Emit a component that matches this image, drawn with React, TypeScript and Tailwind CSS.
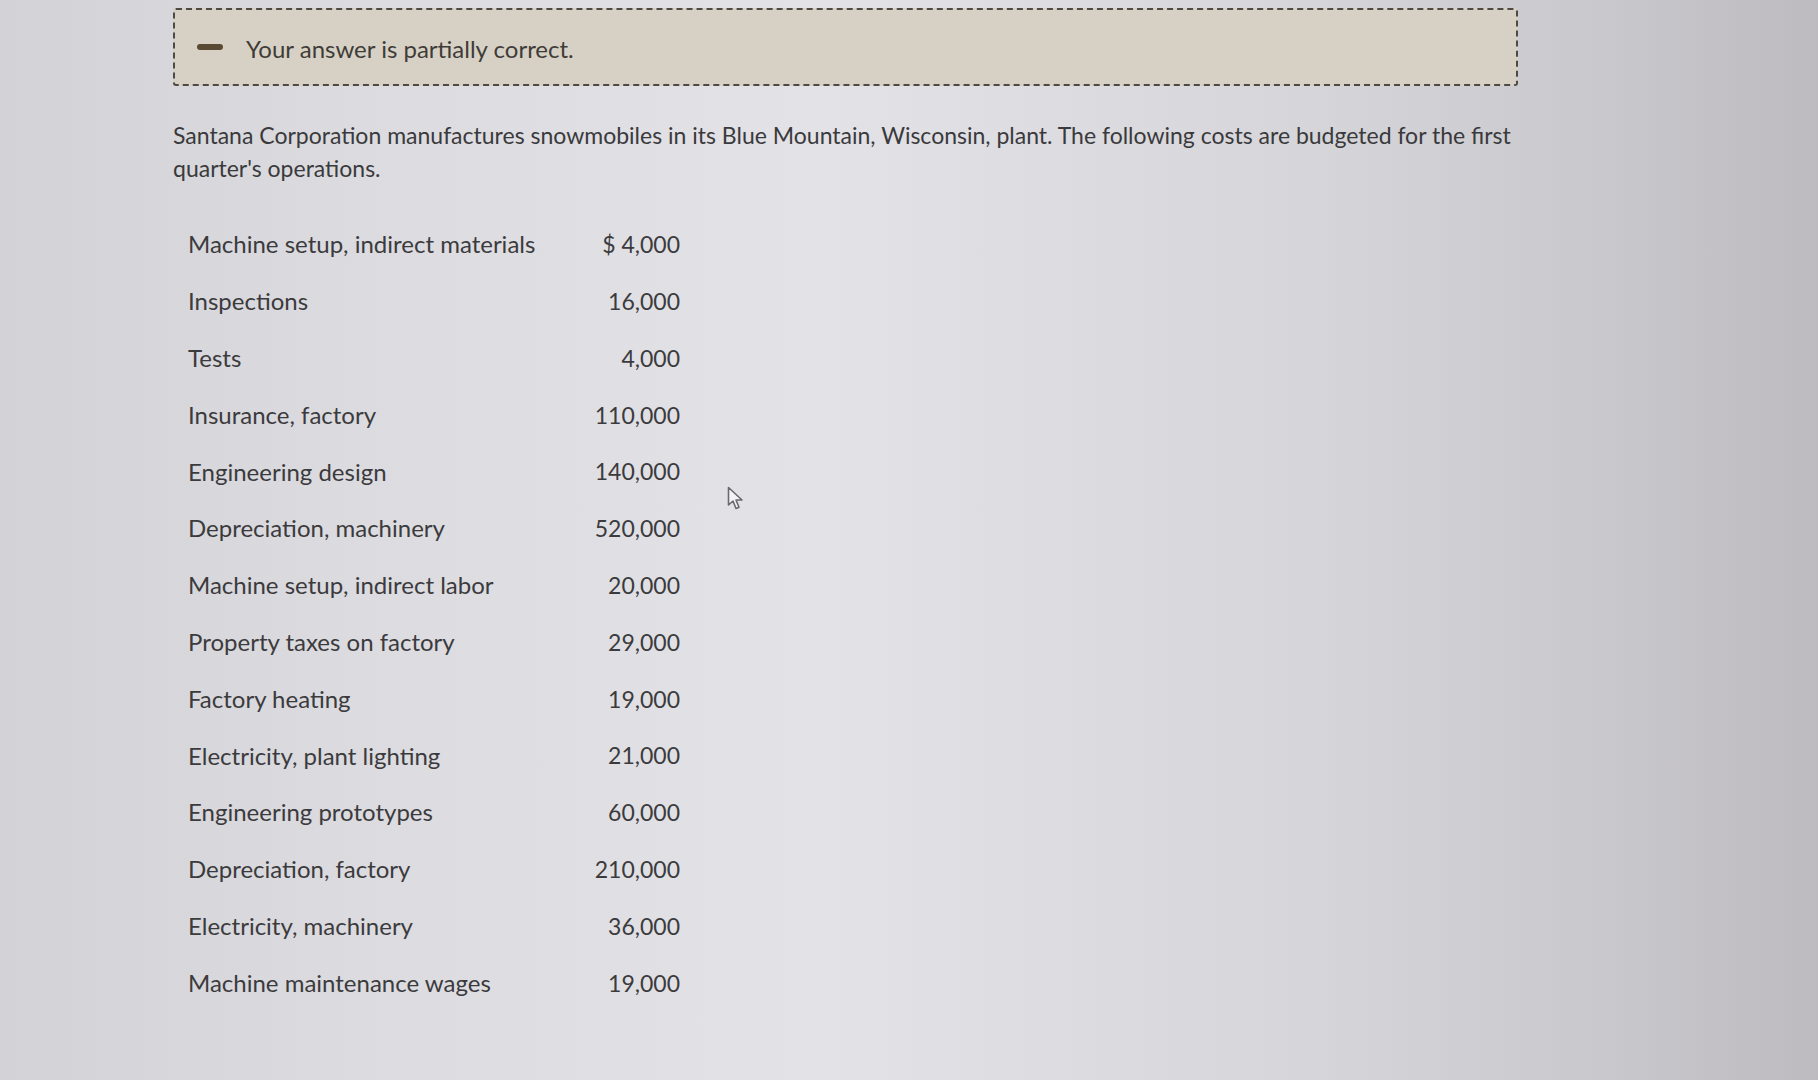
const ROWS: [string, string][] = [
  ["Machine setup, indirect materials", "$ 4,000"],
  ["Inspections", "16,000"],
  ["Tests", "4,000"],
  ["Insurance, factory", "110,000"],
  ["Engineering design", "140,000"],
  ["Depreciation, machinery", "520,000"],
  ["Machine setup, indirect labor", "20,000"],
  ["Property taxes on factory", "29,000"],
  ["Factory heating", "19,000"],
  ["Electricity, plant lighting", "21,000"],
  ["Engineering prototypes", "60,000"],
  ["Depreciation, factory", "210,000"],
  ["Electricity, machinery", "36,000"],
  ["Machine maintenance wages", "19,000"],
];

export default function App() {
  return (
    <div className="relative min-h-[1080px] w-full overflow-hidden bg-[linear-gradient(90deg,#d3d2d6_0%,#dcdbe0_20%,#e3e2e7_45%,#d6d5da_72%,#c9c8cc_88%,#bdbbc0_100%)] font-['Lato','Liberation_Sans',sans-serif] text-[#3b3b3d]">
      <div className="ml-[173px] w-[1345px] pt-[8px]">
        <div className="flex h-[78px] items-center rounded-[3px] border-2 border-dashed border-[#4d4a46] bg-[#d7d1c5] pl-[22px]">
          <span className="block h-[6px] w-[26px] rounded-full bg-[#5b4a33]" />
          <span className="ml-[23px] pt-[4px] text-[24px] text-[#3f3c38]">Your answer is partially correct.</span>
        </div>

        <p className="mt-[33px] text-[23px] leading-[33px] text-[#3a3a3c]">
          Santana Corporation manufactures snowmobiles in its Blue Mountain, Wisconsin, plant. The following costs are budgeted for the first quarter's operations.
        </p>

        <div className="mt-[31px] ml-[15px] w-[492px]">
          {ROWS.map(([label, value]) => (
            <div key={label} className="flex h-[56.8px] items-center justify-between">
              <span className="text-[24px]">{label}</span>
              <span className="text-[23px]">{value}</span>
            </div>
          ))}
        </div>
      </div>

      <svg className="absolute left-[727px] top-[486px]" width="18" height="26" viewBox="0 0 18 26">
        <path d="M1.5 1.5 L1.5 19 L6 15 L9 22.5 L12 21.2 L9 14 L15 14 Z" fill="#f4f4f6" stroke="#6a6a6e" strokeWidth="1.6" strokeLinejoin="round" />
      </svg>
    </div>
  );
}
